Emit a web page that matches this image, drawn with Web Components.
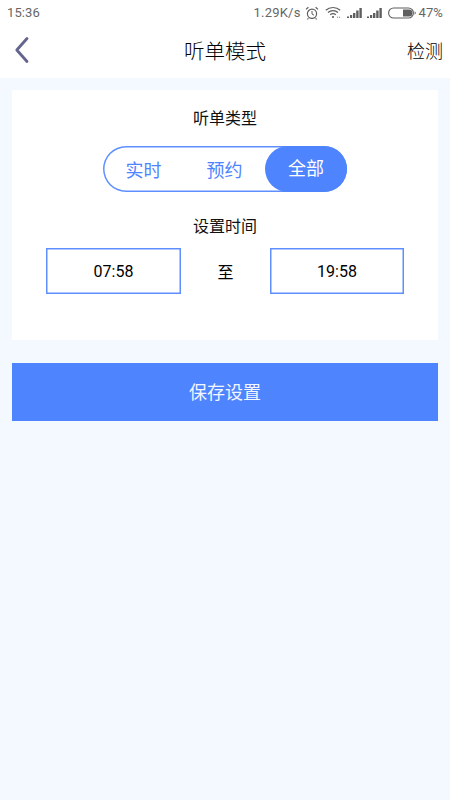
<!DOCTYPE html>
<html lang="zh">
<head>
<meta charset="utf-8">
<title>听单模式</title>
<style>
  html, body { margin: 0; height: 100%; }
  body {
    background: #f4f8ff;
    font-family: Roboto, "Noto Sans CJK SC", sans-serif;
    color: #000;
  }
  app-page { min-height: 800px; }
</style>
</head>
<body>
<app-page>
  <status-bar></status-bar>
  <nav-bar title="听单模式" action="检测"></nav-bar>
  <setting-card>
    <type-switch></type-switch>
    <time-range from="07:58" to="19:58"></time-range>
  </setting-card>
  <save-button>保存设置</save-button>
</app-page>

<script>
class AppPage extends HTMLElement {
  constructor() {
    super();
    this.attachShadow({ mode: "open" });
    this.shadowRoot.innerHTML = `
      <style>
        :host { display: flex; flex-direction: column; width: 450px; }
      </style>
      <slot></slot>
    `;
  }
}

class StatusBar extends HTMLElement {
  constructor() {
    super();
    this.attachShadow({ mode: "open" });
    this.shadowRoot.innerHTML = `
      <style>
        :host {
          display: flex; align-items: center; justify-content: space-between;
          height: 25px; padding: 0 7px; background: #fff; color: #666;
          font-size: 13px; letter-spacing: 0.1px;
        }
        .right { display: flex; align-items: center; }
        svg { display: block; }
        .speed { margin-right: 4px; letter-spacing: 0.2px; }
        .alarm { margin-right: 6px; }
        .wifi { margin-right: 6px; }
        .sig { margin-right: 5px; }
        .sig2 { margin-right: 6px; }
        .bat { margin-right: 3px; }
      </style>
      <span>15:36</span>
      <div class="right">
        <span class="speed">1.29K/s</span>
        <svg class="alarm" width="14" height="14" viewBox="0 0 14 14" fill="none" stroke="#5e5e5e">
          <circle cx="7" cy="7.8" r="4.6" stroke-width="1.2"/>
          <path d="M7 5v3l2 1.2" stroke-width="1"/>
          <path d="M1 3.4 3.4 1.2M13 3.4 10.6 1.2M3.4 12.4 2.4 13.4M10.6 12.4l1 1" stroke-width="1.2"/>
        </svg>
        <svg class="wifi" width="16" height="13" viewBox="0 0 16 13" fill="none" stroke="#5e5e5e" stroke-width="1.2">
          <path d="M.8 4.2C4.8.6 11.2.6 15.2 4.2"/>
          <path d="M3 6.5c2.8-2.5 7.2-2.5 10 0"/>
          <path d="M5.2 8.8c1.6-1.4 4-1.4 5.6 0"/>
          <circle cx="8" cy="11" r="1.1" fill="#5e5e5e" stroke="none"/>
          <circle cx="12.5" cy="11.2" r=".7" fill="#9a9a9a" stroke="none"/>
          <circle cx="14.6" cy="11.2" r=".7" fill="#9a9a9a" stroke="none"/>
        </svg>
        <svg class="sig" width="15" height="12" viewBox="0 0 15 12" fill="#5e5e5e">
          <path d="M0 9.5h2V11H0zM3 8h2.2v3H3zM6 6h2.4v5H6zM9.2 3.5h2.4V11H9.2zM12.4 1h2.4v10h-2.4z"/>
        </svg>
        <svg class="sig2" width="15" height="12" viewBox="0 0 15 12" fill="#5e5e5e">
          <path d="M0 9.5h2V11H0zM3 8h2.2v3H3zM6 6h2.4v5H6zM9.2 3.5h2.4V11H9.2zM12.4 1h2.4v10h-2.4z"/>
        </svg>
        <svg class="bat" width="28" height="12" viewBox="0 0 28 12">
          <rect x=".6" y="1" width="24.8" height="10" rx="5" fill="none" stroke="#5e5e5e" stroke-width="1.1"/>
          <path d="M15 2.5h6a3.5 3.5 0 0 1 0 7h-6z" fill="#5e5e5e"/>
          <path d="M26.6 4.2a2 2 0 0 1 0 3.6z" fill="#5e5e5e"/>
        </svg>
        <span>47%</span>
      </div>
    `;
  }
}

class NavBar extends HTMLElement {
  constructor() {
    super();
    this.attachShadow({ mode: "open" });
    this.shadowRoot.innerHTML = `
      <style>
        :host {
          display: grid; grid-template-columns: 60px 1fr 60px; align-items: center;
          height: 53px; padding-bottom: 3px; box-sizing: border-box; background: #fff; color: #000;
        }
        svg { display: block; margin: 0 0 0 14px; }
        .title { text-align: center; font-size: 20.5px; font-weight: 300; }
        .action { text-align: right; font-size: 18px; font-weight: 300; padding-right: 7px; }
      </style>
      <svg width="16" height="28" viewBox="0 0 16 28" fill="none" stroke="#64648e" stroke-width="2.8" stroke-linecap="round" stroke-linejoin="round">
        <path d="M13 2.5 2.8 14 13 25.5"/>
      </svg>
      <div class="title">${this.getAttribute("title")}</div>
      <div class="action">${this.getAttribute("action")}</div>
    `;
  }
}

class SettingCard extends HTMLElement {
  constructor() {
    super();
    this.attachShadow({ mode: "open" });
    this.shadowRoot.innerHTML = `
      <style>
        :host {
          display: flex; flex-direction: column; align-items: center;
          height: 250px; margin: 12px 12px 0; background: #fff; box-sizing: border-box;
          padding-top: 18px;
        }
      </style>
      <slot></slot>
    `;
  }
}

class TypeSwitch extends HTMLElement {
  constructor() {
    super();
    this.attachShadow({ mode: "open" });
    this.shadowRoot.innerHTML = `
      <style>
        :host { display: flex; flex-direction: column; align-items: center; width: 100%; }
        .label { font-size: 16px; line-height: 22px; color: #111; }
        .track {
          display: flex; align-items: center; box-sizing: border-box;
          width: 244px; height: 46px; margin-top: 16px;
          box-shadow: inset 0 0 0 1.5px #5f8fff; border-radius: 23px; color: #4f84ff; font-size: 18px;
        }
        .opt { width: 81px; text-align: center; }
        .opt.first { margin-left: 0; }
        .opt.on {
          margin-left: auto; width: 82px; height: 46px; line-height: 46px;
          background: #4f84ff; color: #fff; border-radius: 23px;
        }
      </style>
      <div class="label">听单类型</div>
      <div class="track">
        <span class="opt first">实时</span>
        <span class="opt">预约</span>
        <span class="opt on">全部</span>
      </div>
    `;
  }
}

class TimeRange extends HTMLElement {
  constructor() {
    super();
    this.attachShadow({ mode: "open" });
    this.shadowRoot.innerHTML = `
      <style>
        :host { display: flex; flex-direction: column; align-items: center; width: 100%; margin-top: 24px; }
        .label { font-size: 16px; line-height: 22px; color: #111; }
        .row {
          display: grid; grid-template-columns: 135px 1fr 134px; align-items: center;
          width: 358px; margin-top: 10px;
        }
        .box {
          box-sizing: border-box; height: 46px; line-height: 48px; text-align: center;
          box-shadow: inset 0 0 0 1.5px #5f8fff; font-size: 16px; color: #000;
        }
        .to { text-align: center; font-size: 16px; }
      </style>
      <div class="label">设置时间</div>
      <div class="row">
        <div class="box">${this.getAttribute("from")}</div>
        <div class="to">至</div>
        <div class="box">${this.getAttribute("to")}</div>
      </div>
    `;
  }
}

class SaveButton extends HTMLElement {
  constructor() {
    super();
    this.attachShadow({ mode: "open" });
    this.shadowRoot.innerHTML = `
      <style>
        :host {
          display: flex; align-items: center; justify-content: center; box-sizing: border-box;
          height: 58px; padding-bottom: 2px; margin: 23px 12px 0; background: #4f84ff; color: #f2f6ff;
          font-size: 18px;
        }
      </style>
      <slot></slot>
    `;
  }
}

customElements.define("app-page", AppPage);
customElements.define("status-bar", StatusBar);
customElements.define("nav-bar", NavBar);
customElements.define("setting-card", SettingCard);
customElements.define("type-switch", TypeSwitch);
customElements.define("time-range", TimeRange);
customElements.define("save-button", SaveButton);
</script>
</body>
</html>
